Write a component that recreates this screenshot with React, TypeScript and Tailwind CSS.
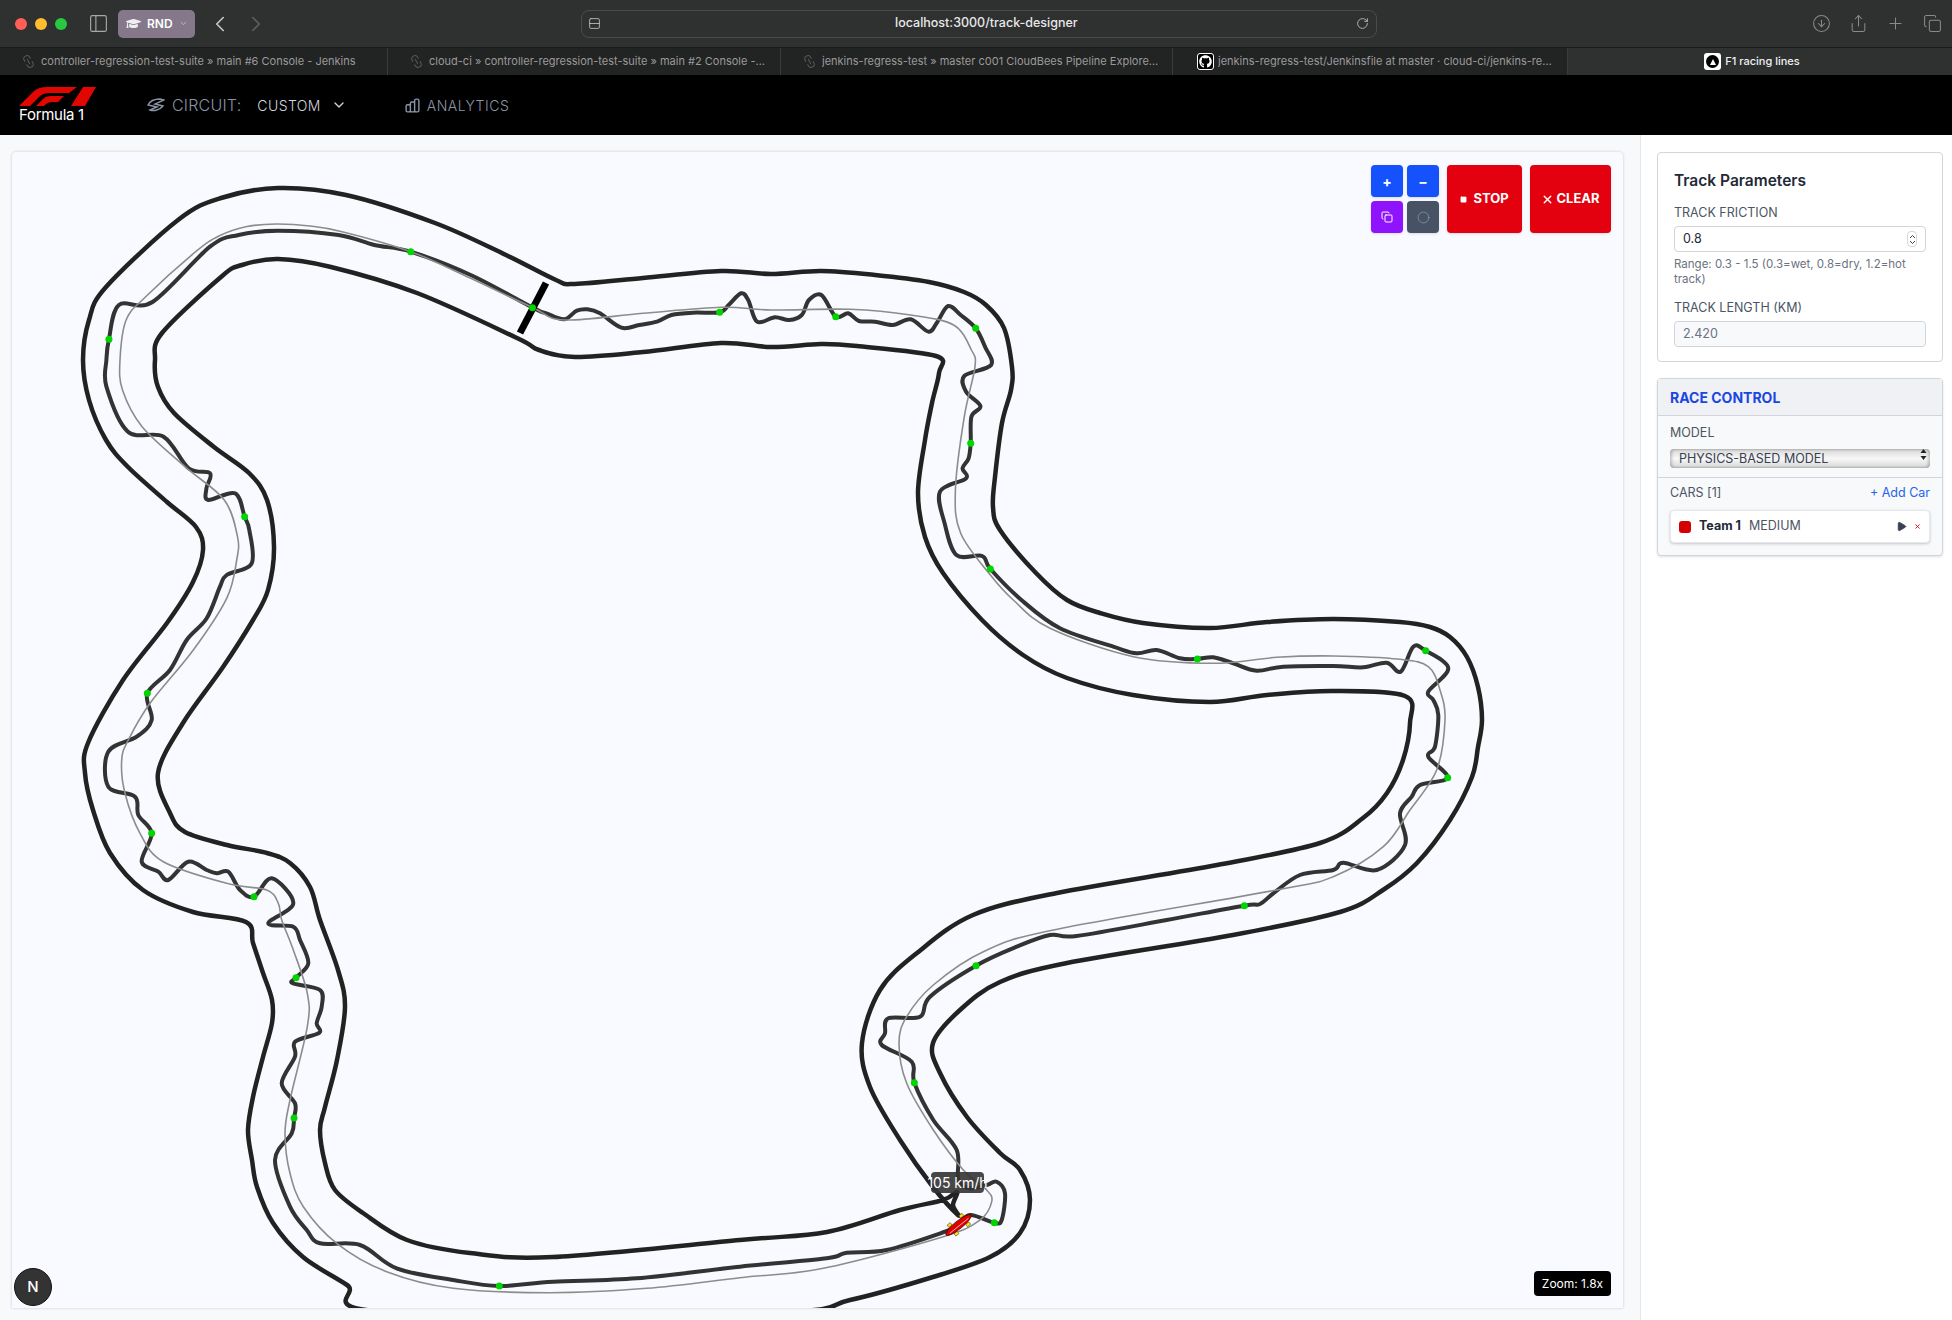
import { CircleArrowDown, Copy, Link2, PanelLeft, Plus, RotateCw, Share, X, ChevronDown, ChevronLeft, ChevronRight, Play, Square, Circle, Rows2 } from "lucide-react";
import { FaGithub, FaGraduationCap } from "react-icons/fa";
import { HiOutlineChartBar } from "react-icons/hi";

type P = [number, number];

// Points read from crops of the picture: [origin x, origin y, scale x, scale y, flat list]
const crop = (ox: number, oy: number, sx: number, sy: number, flat: number[]): P[] => {
  const out: P[] = [];
  for (let i = 0; i < flat.length; i += 2) out.push([ox + flat[i] / sx, oy + flat[i + 1] / sy]);
  return out;
};
const Z7 = (f: number[]) => crop(60, 160, 2.8, 3, f);
const Z8 = (f: number[]) => crop(500, 250, 2.8, 3, f);
const Z9 = (f: number[]) => crop(1000, 600, 3, 3, f);
const Z10 = (f: number[]) => crop(60, 540, 3, 3, f);
const Z11 = (f: number[]) => crop(220, 900, 3, 3, f);
const Z12 = (f: number[]) => crop(700, 900, 3, 3, f);

const smooth = (p: P[]) => {
  const n = p.length;
  let d = `M${p[0][0].toFixed(1)} ${p[0][1].toFixed(1)}`;
  for (let i = 0; i < n; i++) {
    const a = p[(i - 1 + n) % n], b = p[i], c = p[(i + 1) % n], e = p[(i + 2) % n];
    const c1 = [b[0] + (c[0] - a[0]) / 6, b[1] + (c[1] - a[1]) / 6];
    const c2 = [c[0] - (e[0] - b[0]) / 6, c[1] - (e[1] - b[1]) / 6];
    d += `C${c1[0].toFixed(1)} ${c1[1].toFixed(1)} ${c2[0].toFixed(1)} ${c2[1].toFixed(1)} ${c[0].toFixed(1)} ${c[1].toFixed(1)}`;
  }
  return d + "Z";
};

const outer: P[] = [
  [575, 284], [643, 278], [721, 271], [771, 274], [821, 271], [875, 275], [929, 282], [964, 292], [986, 305], [1004, 328], [1012, 367], [1011, 390], [1002, 423], [995, 477], [993, 507], [1000, 530], [1036, 573], [1067, 600], [1100, 613], [1143, 623], [1210, 628], [1267, 622], [1333, 619], [1400, 622], [1430, 627], [1450, 637], [1467, 657], [1478, 687], [1482, 720], [1478, 747], [1472, 777], [1450, 820], [1417, 863], [1383, 890], [1340, 912], [1233, 935], [1067, 963], [1000, 982], [960, 1010], [933, 1043], [940, 1073], [967, 1117], [1000, 1153], [1020, 1170], [1030, 1200], [1020, 1233], [990, 1257], [933, 1277], [850, 1300], [773, 1312], [387, 1312], [347, 1285], [303, 1257], [273, 1223], [257, 1187], [252, 1160], [248, 1130], [253, 1097], [263, 1057], [272, 1023], [272, 1000], [263, 973], [253, 943], [246, 922], [193, 912], [143, 890], [110, 853], [93, 810], [85, 773], [88, 743], [123, 680], [167, 623], [193, 582], [203, 550], [196, 527], [167, 502], [128, 467], [106, 440], [89, 400], [83, 360], [89, 320], [106, 287], [178, 220], [221, 198], [278, 188], [346, 195], [435, 223], [506, 255], [556, 280],
];
const inner: P[] = [
  [575, 357], [643, 352], [721, 343], [771, 347], [821, 344], [857, 346], [936, 356], [939, 373], [932, 403], [925, 440], [918, 493], [925, 537], [943, 573], [982, 620], [1023, 655], [1067, 678], [1133, 695], [1210, 702], [1267, 695], [1333, 691], [1405, 696], [1410, 723], [1403, 760], [1387, 793], [1363, 818], [1320, 843], [1217, 865], [1057, 893], [973, 915], [917, 953], [880, 990], [862, 1043], [870, 1087], [900, 1140], [933, 1187], [958, 1215], [953, 1205], [957, 1192], [943, 1200], [900, 1210], [827, 1232], [740, 1240], [553, 1257], [470, 1253], [407, 1240], [363, 1213], [335, 1190], [325, 1163], [320, 1130], [325, 1107], [337, 1060], [345, 1007], [338, 970], [320, 920], [310, 887], [290, 863], [267, 853], [227, 845], [185, 832], [170, 813], [158, 773], [183, 723], [223, 667], [253, 620], [268, 590], [274, 547], [267, 500], [249, 473], [214, 447], [174, 413], [158, 387], [155, 360], [162, 333], [221, 277], [242, 265], [278, 259], [331, 267], [417, 293], [517, 338], [539, 350],
];
const racing: P[] = [
  ...Z8([92, 173, 130, 190, 180, 208, 215, 182, 245, 178, 280, 190, 340, 233, 390, 225, 440, 215, 480, 195, 540, 188, 615, 187, 640, 165, 675, 130, 695, 150, 720, 215, 770, 202, 810, 210, 845, 195, 865, 150, 900, 135, 940, 200, 975, 190, 1005, 213, 1050, 215, 1100, 225, 1150, 208, 1200, 245, 1225, 215, 1255, 168, 1290, 195, 1332, 235, 1358, 290, 1375, 345, 1300, 378, 1305, 425, 1345, 468, 1320, 500, 1318, 580, 1312, 625, 1295, 655, 1305, 685, 1232, 725, 1245, 820, 1278, 915, 1350, 918, 1373, 957, 1460, 1050]),
  ...Z9([180, 85, 340, 140, 410, 160, 470, 150, 540, 175, 592, 177, 640, 172, 700, 190, 770, 212, 850, 200, 1000, 198, 1090, 202, 1160, 188, 1202, 215, 1240, 140, 1277, 152, 1345, 205, 1285, 275, 1300, 300, 1315, 345, 1305, 440, 1285, 470, 1343, 533, 1260, 555, 1235, 590, 1200, 640, 1215, 735, 1130, 810, 1030, 788, 1000, 810, 900, 825, 820, 880, 780, 912, 733, 917, 500, 960]),
  ...Z12([1130, 108, 1050, 105, 950, 140, 828, 197, 690, 290, 660, 350, 565, 355, 555, 400, 545, 435, 635, 485, 643, 548, 700, 660, 770, 750, 775, 840, 810, 865, 860, 855, 890, 845, 915, 880, 905, 960, 883, 968, 810, 945, 775, 975, 735, 995, 560, 1050, 440, 1058, 380, 1075]),
  ...Z11([1560, 1100, 1250, 1135, 1000, 1145, 838, 1158, 700, 1140, 530, 1105, 420, 1035, 300, 1030, 260, 990, 210, 920, 165, 780, 215, 700, 222, 654, 225, 610, 185, 550, 225, 470, 225, 425, 298, 398, 290, 370, 305, 320, 300, 270, 218, 250, 228, 233, 265, 190, 240, 120, 220, 80, 145, 70, 220, 10]),
  ...Z10([635, 1015, 582, 1070, 540, 1050, 505, 995, 470, 1000, 440, 990, 385, 965, 325, 1020, 295, 995, 245, 965, 275, 880, 235, 825, 225, 770, 145, 740, 145, 635, 230, 590, 275, 540, 262, 460, 330, 390, 380, 300, 440, 235, 480, 140, 500, 105, 575, 70]),
  ...Z7([530, 1110, 517, 1070, 490, 1000, 415, 1020, 410, 985, 420, 940, 360, 925, 290, 830, 190, 815, 130, 680, 130, 600, 137, 538, 165, 435, 260, 425, 420, 260, 500, 225, 610, 212, 780, 225, 880, 255, 982, 275, 1150, 345]),
];
const grey: P[] = [
  ...Z8([92, 173, 180, 210, 400, 190, 620, 172, 760, 180, 980, 178, 1150, 195, 1270, 225, 1320, 300, 1330, 350, 1300, 500, 1275, 720, 1290, 850, 1373, 975]),
  ...Z9([40, 0, 150, 85, 400, 170, 640, 190, 830, 172, 1000, 168, 1200, 178, 1285, 200, 1320, 270, 1335, 360, 1310, 510, 1230, 630, 1150, 740, 1000, 830, 830, 870]),
  ...Z12([1060, 90, 850, 155, 700, 255, 620, 350, 597, 430, 620, 550, 700, 690, 790, 810, 860, 870, 875, 905, 840, 960, 730, 1010, 370, 1105]),
  ...Z11([1560, 1133, 1280, 1165, 990, 1178, 700, 1165, 500, 1115, 350, 1030, 250, 920, 210, 820, 195, 700, 210, 600, 262, 380, 262, 280, 220, 150, 185, 60]),
  ...Z10([655, 1090, 620, 1050, 500, 1030, 310, 965, 240, 880, 195, 760, 185, 660, 205, 600, 270, 490, 400, 330, 500, 175, 530, 60]),
  ...Z7([497, 1130, 460, 1020, 350, 920, 230, 800, 175, 690, 168, 600, 185, 480, 240, 410, 380, 275, 445, 228, 520, 200, 605, 192, 700, 198, 790, 215, 982, 275, 1150, 355]),
];
const dots: P[] = [
  ...Z7([1323, 443, 982, 275, 137, 538, 517, 1070]),
  ...Z8([615, 187, 940, 200, 1332, 235, 1318, 580, 1373, 957]),
  ...Z9([592, 177, 1277, 152, 1343, 533, 733, 917]),
  ...Z12([828, 197, 643, 548, 883, 968]),
  ...Z11([838, 1158, 222, 654, 228, 233]),
  ...Z10([582, 1070, 275, 880, 262, 460]),
];

function TrackDrawing() {
  return (
    <svg className="absolute inset-0 h-full w-full" viewBox="12 152 1611 1156" fill="none">
      <path d={smooth(outer)} stroke="#222" strokeWidth={4.5} strokeLinejoin="round" />
      <path d={smooth(inner)} stroke="#222" strokeWidth={4.5} strokeLinejoin="round" />
      <path d={smooth(racing)} stroke="#333" strokeWidth={4} strokeLinejoin="round" />
      <path d={smooth(grey)} stroke="#8c8c8c" strokeWidth={1.6} strokeLinejoin="round" />
      <line x1={546} y1={283} x2={520} y2={333} stroke="#000" strokeWidth={7} />
      {dots.map(([x, y]) => (
        <circle key={`${x}-${y}`} cx={x} cy={y} r={3.5} fill="#00d500" />
      ))}
      <g transform="translate(958.5 1225) rotate(-38.7)">
        <rect x={-9} y={-7} width={4} height={3} fill="#ffe600" stroke="#222" strokeWidth={0.5} />
        <rect x={-9} y={4} width={4} height={3} fill="#ffe600" stroke="#222" strokeWidth={0.5} />
        <rect x={6} y={-7} width={4} height={3} fill="#ffe600" stroke="#222" strokeWidth={0.5} />
        <rect x={6} y={4} width={4} height={3} fill="#ffe600" stroke="#222" strokeWidth={0.5} />
        <ellipse cx={0} cy={0} rx={16} ry={4} fill="#e00000" stroke="#400" strokeWidth={0.7} />
        <line x1={-12} y1={1} x2={12} y2={1} stroke="#f4b0b0" strokeWidth={0.9} />
      </g>
    </svg>
  );
}

function F1Logo() {
  return (
    <svg width={77} height={19} viewBox="0 0 77 19" fill="#e10600">
      <path d="M0 19 L14 5 Q19 0 28 0 L58 0 L50 6 L30 6 Q24 6 20 10 L11 19 Z" />
      <path d="M17 19 L24 12 Q27 9 32 9 L45 9 L39 15 L33 15 Q30 15 27 17 L25 19 Z" />
      <path d="M64 0 L77 0 L66 19 L52 19 Z" />
    </svg>
  );
}

function BrowserTab({ text, width }: { text: string; width: string }) {
  return (
    <div className={`flex h-full items-center gap-[5px] border-r border-[#3a3b3b] bg-[#222323] pl-[21px] pr-3 ${width}`}>
      <Link2 size={15} strokeWidth={1.5} className="shrink-0 rotate-[60deg] text-[#5c5c5c]" />
      <span className="truncate text-[11px] text-[#9a9a9a]">{text}</span>
    </div>
  );
}

function Field({ label, value, muted }: { label: string; value: string; muted?: boolean }) {
  return (
    <>
      <div className="text-[12.5px] leading-4 text-[#4b5563]">{label}</div>
      <div className={`mt-[5px] flex h-[26px] items-center justify-between rounded border border-[#d1d5db] px-2 text-[12.5px] ${muted ? "bg-[#f8f9fb] text-[#6b7280]" : "bg-white text-[#1f2937]"}`}>
        <span>{value}</span>
        {!muted && (
          <span className="flex h-4 w-[10px] flex-col items-center justify-center rounded-sm border border-[#d8d8d8] text-[#444]">
            <svg width={7} height={11} viewBox="0 0 7 11" fill="none" stroke="currentColor" strokeWidth={1}>
              <path d="M1 4 L3.5 1.5 L6 4 M1 7 L3.5 9.5 L6 7" />
            </svg>
          </span>
        )}
      </div>
    </>
  );
}

export default function App() {
  return (
    <div className="flex h-[1320px] w-[1952px] flex-col overflow-hidden bg-white font-['Inter',sans-serif]">
      {/* Browser toolbar */}
      <div className="relative flex h-[47px] shrink-0 items-center bg-[#2f3030]">
        <div className="ml-[15px] flex gap-2">
          <span className="h-3 w-3 rounded-full bg-[#ff5f57]" />
          <span className="h-3 w-3 rounded-full bg-[#febc2e]" />
          <span className="h-3 w-3 rounded-full bg-[#28c840]" />
        </div>
        <PanelLeft size={21} strokeWidth={1.3} className="ml-[21px] text-[#a8a8a8]" />
        <div className="ml-[9px] flex h-7 w-[77px] items-center rounded-[5px] bg-[#85788a] pl-[8px] text-white">
          <FaGraduationCap size={15} className="text-[#eee]" />
          <span className="ml-[6px] text-[12px] font-semibold">RND</span>
          <ChevronDown size={9} className="ml-[6px] text-[#d0c8d4]" />
        </div>
        <ChevronLeft size={26} strokeWidth={1.5} className="ml-[12px] text-[#c8c8c8]" />
        <ChevronRight size={26} strokeWidth={1.5} className="ml-[10px] text-[#5e5e5e]" />
        <div className="ml-[312px] flex h-7 w-[796px] items-center rounded-lg border border-[#4a4b4b] px-[6px]">
          <Rows2 size={13} strokeWidth={1.5} className="text-[#c8c8c8]" />
          <span className="ml-[294px] text-[12.5px] font-medium text-[#e8e8e8]">localhost:3000/track-designer</span>
          <RotateCw size={13} strokeWidth={1.5} className="ml-auto mr-[1px] text-[#c8c8c8]" />
        </div>
        <CircleArrowDown size={19} strokeWidth={1.3} className="ml-[435px] text-[#8a8a8a]" />
        <Share size={19} strokeWidth={1.3} className="ml-[18px] text-[#8a8a8a]" />
        <Plus size={19} strokeWidth={1.3} className="ml-[18px] text-[#8a8a8a]" />
        <Copy size={19} strokeWidth={1.3} className="ml-[18px] text-[#8a8a8a]" />
      </div>

      {/* Tab strip */}
      <div className="flex h-7 shrink-0 items-center border-t border-[#1a1a1a] bg-[#2f3030]">
        <BrowserTab width="w-[388px]" text="controller-regression-test-suite » main #6 Console - Jenkins" />
        <BrowserTab width="w-[393px]" text="cloud-ci » controller-regression-test-suite » main #2 Console - Jenkins" />
        <BrowserTab width="w-[392px]" text="jenkins-regress-test » master c001 CloudBees Pipeline Explorer - Jenkins" />
        <div className="flex h-full w-[395px] items-center gap-[4px] border-r border-[#3a3b3b] bg-[#222323] pl-[24px] pr-3">
          <span className="flex h-[17px] w-[17px] shrink-0 items-center justify-center rounded-[3px] border border-white bg-black">
            <FaGithub size={13} className="text-white" />
          </span>
          <span className="truncate text-[11px] text-[#9a9a9a]">jenkins-regress-test/Jenkinsfile at master · cloud-ci/jenkins-regress-test</span>
        </div>
        <div className="flex flex-1 items-center justify-center gap-[4px] pr-[16px]">
          <span className="flex h-[17px] w-[17px] items-center justify-center rounded-[3px] bg-white">
            <span className="flex h-[13px] w-[13px] items-center justify-center rounded-full bg-black">
              <span className="h-0 w-0 border-x-[3.5px] border-b-[6px] border-x-transparent border-b-white" />
            </span>
          </span>
          <span className="text-[11px] font-medium text-[#f0f0f0]">F1 racing lines</span>
        </div>
      </div>

      {/* App nav */}
      <nav className="flex h-[60px] shrink-0 items-center bg-black">
        <div className="ml-[19px] flex w-[78px] flex-col">
          <F1Logo />
          <span className="mt-[1px] whitespace-nowrap text-[15px] leading-4 tracking-[-0.3px] text-white">Formula 1</span>
        </div>
        <svg className="ml-[50px]" width={18} height={14} viewBox="0 0 18 14" fill="none" stroke="#8a94a6" strokeWidth={1.4}>
          <path d="M1 7 C3 3 8 1 13 1 L17 2 L8 6 L16 8 C12 13 6 13 3 12 L10 9 Z" />
        </svg>
        <span className="ml-[7px] text-[16px] font-light tracking-[0.2px] text-[#8a94a6]">CIRCUIT:</span>
        <span className="ml-[16px] text-[14px] font-light tracking-[0.4px] text-[#d1d5db]">CUSTOM</span>
        <ChevronDown size={16} strokeWidth={2} className="ml-[10px] text-[#d1d5db]" />
        <HiOutlineChartBar size={17} className="ml-[57px] text-[#8a94a6]" />
        <span className="ml-[6px] text-[14px] font-light tracking-[0.5px] text-[#8a94a6]">ANALYTICS</span>
      </nav>

      {/* Main */}
      <div className="flex min-h-0 flex-1">
        <div className="w-[1640px] shrink-0 bg-[#f8f9fb] pb-3 pl-3 pr-[17px] pt-[17px]">
          <div className="relative h-[1156px] w-[1611px] overflow-hidden rounded-t bg-[#f8faff] shadow-[0_0_3px_rgba(0,0,0,0.2)]">
            <TrackDrawing />

            <div className="absolute right-3 top-[13px] flex gap-2">
              <div className="grid grid-cols-[32px_32px] gap-1">
                <button className="flex h-8 items-center justify-center rounded bg-[#1652fb] text-[14px] font-bold text-white shadow-sm">+</button>
                <button className="flex h-8 items-center justify-center rounded bg-[#1652fb] text-[14px] font-bold text-white shadow-sm">−</button>
                <button className="flex h-8 items-center justify-center rounded bg-[#9013fe] text-white shadow-sm"><Copy size={12} strokeWidth={2} /></button>
                <button className="flex h-8 items-center justify-center rounded bg-[#475264] text-[#aab2bf] shadow-sm"><Circle size={13} strokeWidth={1} /></button>
              </div>
              <button className="flex h-[68px] w-[75px] items-center justify-center gap-[6px] rounded bg-[#e3000f] text-[13px] font-bold text-white shadow-sm">
                <Square size={7} fill="white" />STOP
              </button>
              <button className="flex h-[68px] w-[81px] items-center justify-center gap-[2px] rounded bg-[#e3000f] text-[13px] font-bold text-white shadow-sm">
                <X size={13} strokeWidth={2.5} />CLEAR
              </button>
            </div>

            <div className="absolute left-[919px] top-[1020px] flex h-[21px] w-[53px] items-center justify-center whitespace-nowrap rounded bg-[#333]/90 text-[14px] text-white">105 km/h</div>

            <div className="absolute bottom-[12px] right-3 flex h-[25px] w-[77px] items-center justify-center rounded-sm bg-black text-[12px] text-white">Zoom: 1.8x</div>

            <div className="absolute bottom-[2px] left-[2px] flex h-[38px] w-[38px] items-center justify-center rounded-full border border-[#111] bg-[#333] text-[15px] font-medium text-white">N</div>
          </div>
        </div>

        <aside className="flex-1 border-l border-[#e5e7eb] bg-white pl-4 pr-[9px] pt-[17px]">
          <section className="h-[210px] rounded border border-[#d1d5db] bg-white px-[16px] pt-[18px]">
            <h2 className="text-[15.5px] font-semibold leading-5 text-[#1f2937]">Track Parameters</h2>
            <div className="mt-[14px]">
              <Field label="TRACK FRICTION" value="0.8" />
            </div>
            <p className="mt-[5px] text-[11.5px] leading-[15px] text-[#6b7280]">Range: 0.3 - 1.5 (0.3=wet, 0.8=dry, 1.2=hot track)</p>
            <div className="mt-[13px]">
              <Field muted label="TRACK LENGTH (KM)" value="2.420" />
            </div>
          </section>

          <section className="mt-4 h-[178px] rounded border border-[#d1d5db] bg-[#f8f9fb] shadow-sm">
            <h2 className="flex h-[37px] items-center border-b border-[#d1d5db] bg-[#eff1f5] px-3 text-[14px] font-bold text-[#1a47e0]">RACE CONTROL</h2>
            <div className="border-b border-[#d1d5db] px-3 pb-2 pt-[9px]">
              <div className="text-[12.5px] leading-4 text-[#4b5563]">MODEL</div>
              <div className="relative mt-[4px]">
                <select className="h-[19px] w-full appearance-none rounded bg-linear-to-b from-[#d6d6d6] via-[#f8f8f8] to-[#d6d6d6] pl-[9px] text-[12.5px] leading-[19px] text-[#374151] shadow-[inset_2px_0_3px_rgba(0,0,0,0.2),inset_-2px_0_3px_rgba(0,0,0,0.2)]">
                  <option>PHYSICS-BASED MODEL</option>
                </select>
                <svg className="absolute right-[3px] top-[3px]" width={7} height={13} viewBox="0 0 7 13" fill="#222">
                  <path d="M3.5 1 L6.5 5 L0.5 5 Z M3.5 12 L6.5 8 L0.5 8 Z" />
                </svg>
              </div>
            </div>
            <div className="px-3 pt-[7px]">
              <div className="flex items-center justify-between text-[12.5px] leading-4">
                <span className="text-[#4b5563]">CARS [1]</span>
                <span className="text-[#2563eb]">+ Add Car</span>
              </div>
              <div className="mt-[9px] flex h-[33px] items-center rounded border border-[#e5e7eb] bg-white pl-[8px] pr-2 shadow-[0_1px_3px_rgba(0,0,0,0.2)]">
                <span className="h-3 w-3 rounded-[3px] bg-[#d50000]" />
                <span className="ml-2 text-[12.5px] font-bold text-[#1f2937]">Team 1</span>
                <span className="ml-2 text-[12.5px] text-[#4b5563]">MEDIUM</span>
                <Play size={11} fill="#374151" className="ml-auto text-[#374151]" />
                <X size={7} strokeWidth={3} className="ml-[7px] text-[#e3000f]" />
              </div>
            </div>
          </section>
        </aside>
      </div>
    </div>
  );
}
